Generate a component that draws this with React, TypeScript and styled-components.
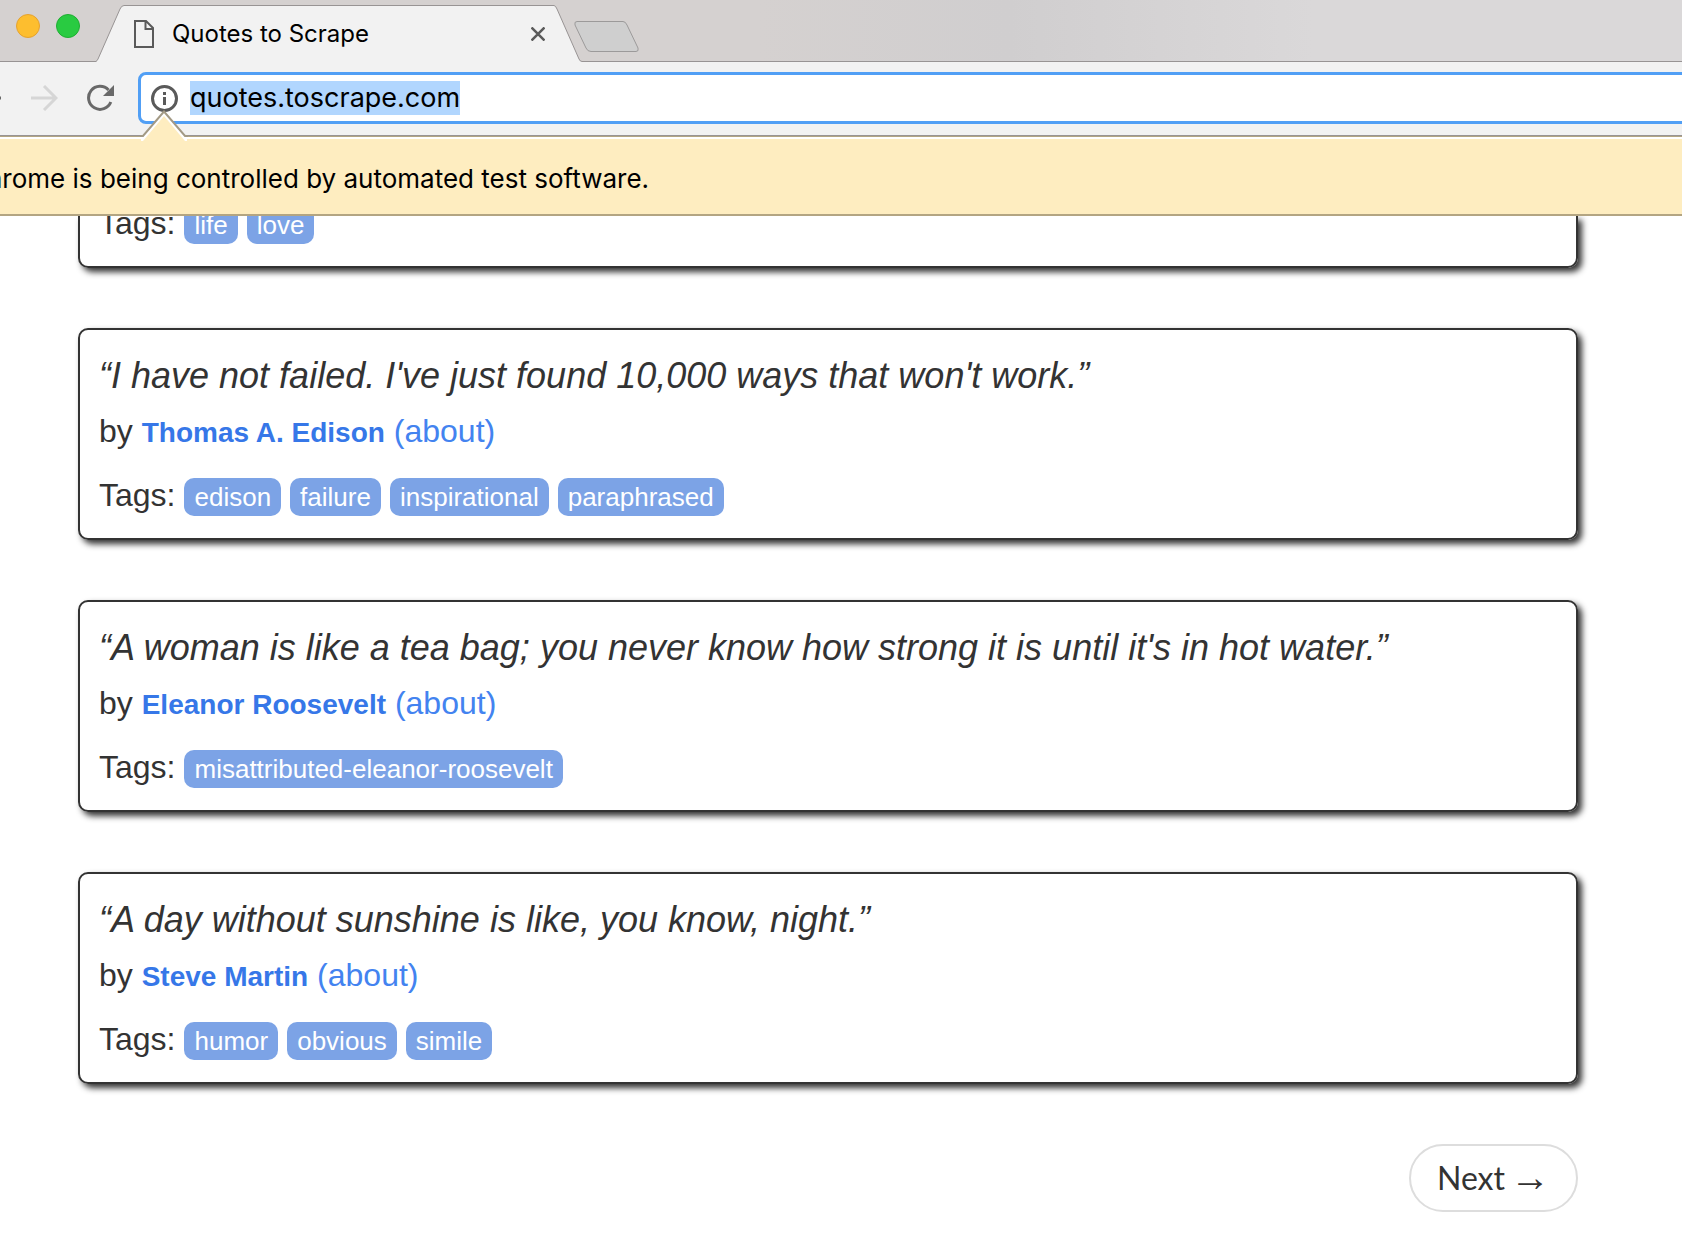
import React from 'react';
import styled, { createGlobalStyle } from 'styled-components';

const ui = `Inter, "Liberation Sans", sans-serif`;
const line = '#989494';

const Global = createGlobalStyle`
  * { box-sizing: border-box; }
  body { margin: 0; background: #fff; overflow: hidden; }
  button { font: inherit; padding: 0; border: 0; background: none; color: inherit; }
  svg { display: block; }
`;

const Window = styled.div`
  font-family: "Liberation Sans", Arial, sans-serif;
  color: #333;
`;

const TabStrip = styled.header`
  display: flex;
  height: 62px;
  background: linear-gradient(90deg, #d5d1d0 0%, #d5d1d0 45%, #d0cecf 60%, #dad8d9 78%, #dad8d9 100%);
`;

const Ledge = styled.div<{ $grow?: boolean }>`
  display: flex;
  align-items: flex-start;
  flex: ${p => (p.$grow ? '1' : 'none')};
  border-bottom: 1px solid ${line};
`;

const Lights = styled.div`
  display: flex;
  gap: 16px;
  padding: 14px 16px;
  width: 96px;
`;

const Light = styled.button<{ $fill: string; $edge: string }>`
  flex: none;
  width: 24px;
  height: 24px;
  border-radius: 50%;
  background: ${p => p.$fill};
  border: 1px solid ${p => p.$edge};
`;

const Tab = styled.div`
  display: flex;
`;

const TabBody = styled.div`
  display: flex;
  align-items: center;
  width: 430px;
  margin-top: 5px;
  padding: 0 9px 0 10px;
  border-top: 1px solid ${line};
  background: #f2f2f2;
  font: 24px/32px ${ui};
  color: #000;
`;

const TabTitle = styled.span`
  flex: 1;
  margin-left: 18px;
`;

const NewTab = styled.button`
  margin: 20px 0 0 -8px;
`;

const Toolbar = styled.div`
  display: flex;
  align-items: center;
  height: 74px;
  padding-bottom: 1px;
  background: #f2f2f2;
  border-bottom: 1px solid ${line};
`;

const NavButtons = styled.div`
  display: flex;
  align-items: center;
  flex: none;
  width: 138px;
  color: #696969;
`;

const BackButton = styled.button`
  margin-left: -26px;
`;
const ForwardButton = styled.button`
  margin-left: 30px;
  color: #d6d6d6;
`;
const ReloadButton = styled.button`
  margin-left: 28px;
`;

const AddressBar = styled.form`
  display: flex;
  align-items: center;
  flex: 1;
  height: 52px;
  margin-right: -20px;
  padding-left: 10px;
  border: 3px solid #519ff5;
  border-radius: 8px;
  background: #fff;
`;

const Address = styled.input`
  field-sizing: content;
  height: 34px;
  margin-left: 12px;
  padding: 0;
  border: 0;
  outline: 0;
  background: #b1d6fe;
  color: #000;
  font: 27px/34px ${ui};
`;

const InfoBar = styled.div`
  position: relative;
  height: 80px;
  padding-top: 24px;
  border-top: 1px solid #b3a582;
  border-bottom: 2px solid #b3a582;
  background: #feedc0;
  box-shadow: inset 0 2px #fff;
  font: 26px/36px ${ui};
  color: #000;
  white-space: nowrap;
`;

const Pointer = styled.svg`
  position: absolute;
  left: 140px;
  top: -27px;
`;

const InfoText = styled.span`
  display: block;
  margin-left: -32px;
`;

const Page = styled.main`
  display: flex;
  flex-direction: column;
  gap: 60px;
  padding: 0 104px 34px 78px;
  overflow: hidden;
`;

const Card = styled.article<{ $cut?: boolean }>`
  padding: ${p => (p.$cut ? '0 19px 20px' : '20px 19px')};
  border: 2px solid #333;
  border-top-width: ${p => (p.$cut ? 0 : 2)}px;
  border-radius: ${p => (p.$cut ? '0 0 10px 10px' : '10px')};
  box-shadow: 4px 4px 6px #333;
  font-size: 32px;
  line-height: 46px;
`;

const Text = styled.p`
  margin: 0 0 6px;
  font-size: 36px;
  line-height: 52px;
  font-style: italic;
`;

const Byline = styled.p`
  margin: 0 0 18px;
`;

const Author = styled.strong`
  font-size: 28px;
  line-height: 32px;
  color: #3677e8;
`;

const About = styled.a`
  color: #4383f0;
  text-decoration: none;
`;

const Tags = styled.div<{ $cut?: boolean }>`
  display: flex;
  align-items: baseline;
  gap: 9px;
  margin-top: ${p => (p.$cut ? -16 : 0)}px;
`;

const Tag = styled.a`
  padding: 4px 10px;
  border-radius: 10px;
  background: #7ca3e6;
  color: #fff;
  font-size: 26px;
  line-height: 30px;
  text-decoration: none;
`;

const Pager = styled.nav`
  display: flex;
  justify-content: flex-end;
`;

const Next = styled.a`
  display: flex;
  align-items: center;
  gap: 5px;
  padding: 9px 26px;
  border: 2px solid #ddd;
  border-radius: 34px;
  color: #333;
  font: 400 32px/46px Lato, sans-serif;
  text-decoration: none;
`;

const Arrow = styled.span`
  font-family: "Liberation Serif", serif;
  font-size: 40px;
  line-height: 46px;
`;

const quotes = [
  { text: '“I have not failed. I\'ve just found 10,000 ways that won\'t work.”', author: 'Thomas A. Edison', tags: ['edison', 'failure', 'inspirational', 'paraphrased'] },
  { text: '“A woman is like a tea bag; you never know how strong it is until it\'s in hot water.”', author: 'Eleanor Roosevelt', tags: ['misattributed-eleanor-roosevelt'] },
  { text: '“A day without sunshine is like, you know, night.”', author: 'Steve Martin', tags: ['humor', 'obvious', 'simile'] },
];

function TagRow({ tags, cut }: { tags: string[]; cut?: boolean }) {
  return (
    <Tags $cut={cut}>
      <span>Tags:</span>
      {tags.map(t => <Tag key={t} href="#">{t}</Tag>)}
    </Tags>
  );
}

function ArrowIcon({ flip }: { flip?: boolean }) {
  return (
    <svg width="27" height="26" viewBox="0 0 27 26" fill="none" stroke="currentColor" strokeWidth="3">
      <path d={flip ? 'M27 13H3M14 1L2 13l12 12' : 'M0 13h24M13 1l12 12-12 12'} />
    </svg>
  );
}

export default function App() {
  return (
    <Window>
      <Global />
      <TabStrip>
        <Ledge>
          <Lights>
            <Light aria-label="Minimize" $fill="#fdbe2f" $edge="#e5a230" />
            <Light aria-label="Zoom" $fill="#29cb41" $edge="#1fae32" />
          </Lights>
        </Ledge>
        <Tab>
          <svg width="28" height="62" viewBox="0 0 28 62">
            <path d="M0 62V61.5Q1 61 2 59L24 9Q25.500 5.500 28 5.500V62Z" fill="#f2f2f2" />
            <path d="M0 61.500Q1 61 2 59L24 9Q25.500 5.500 28 5.500" fill="none" stroke={line} />
          </svg>
          <TabBody>
            <svg width="20" height="28" viewBox="0 0 20 28" fill="none" stroke="#5a5a5a" strokeWidth="2">
              <path d="M1 1H12L19 8V27H1ZM11.500 1V9H19" />
            </svg>
            <TabTitle>Quotes to Scrape</TabTitle>
            <button aria-label="Close tab">
              <svg width="14" height="14" viewBox="0 0 14 14" stroke="#5a5a5a" strokeWidth="2.500">
                <path d="M.5 .5l13 13M13.500 .5l-13 13" />
              </svg>
            </button>
          </TabBody>
          <svg width="28" height="62" viewBox="0 0 28 62">
            <path d="M28 62V61.500Q26 61.500 25 59L3 9Q1.500 5.500 0 5.500V62Z" fill="#f2f2f2" />
            <path d="M28 61.500Q26 61.500 25 59L3 9Q1.500 5.500 0 5.500" fill="none" stroke={line} />
          </svg>
        </Tab>
        <Ledge $grow>
          <NewTab aria-label="New tab">
            <svg width="66" height="33" viewBox="0 0 66 33">
              <path d="M3 1.500H49Q51.500 1.500 53 5L64 28Q65 31.500 62 31.500H17Q13.500 31.500 12 28L1 5Q0 1.500 3 1.500Z" fill="#cfcfcf" stroke="#9c9a9a" />
            </svg>
          </NewTab>
        </Ledge>
      </TabStrip>
      <Toolbar>
        <NavButtons>
          <BackButton aria-label="Back"><ArrowIcon flip /></BackButton>
          <ForwardButton aria-label="Forward"><ArrowIcon /></ForwardButton>
          <ReloadButton aria-label="Reload">
            <svg width="30" height="28" viewBox="0 0 30 28">
              <path d="M24.800 18A11.500 11.500 0 1 1 22.500 6" fill="none" stroke="currentColor" strokeWidth="3" />
              <path d="M28 1V12H17Z" fill="currentColor" />
            </svg>
          </ReloadButton>
        </NavButtons>
        <AddressBar>
          <svg width="27" height="27" viewBox="0 0 27 27">
            <circle cx="13.500" cy="13.500" r="12" fill="none" stroke="#5a5a5a" strokeWidth="3" />
            <path d="M12 7h3v3h-3zM12 12h3v8h-3z" fill="#5a5a5a" />
          </svg>
          <Address aria-label="Address" defaultValue="quotes.toscrape.com" />
        </AddressBar>
      </Toolbar>
      <InfoBar>
        <Pointer width="48" height="31" viewBox="0 0 48 31">
          <path d="M1 31V27L24 2L47 27V31Z" fill="#fff" />
          <path d="M3 31L24 6L45 31Z" fill="#feedc0" />
          <path d="M0 26H3L24 1.500L45 26H48" fill="none" stroke="#a39a85" strokeWidth="2" />
        </Pointer>
        <InfoText>Chrome is being controlled by automated test software.</InfoText>
      </InfoBar>
      <Page>
        <Card $cut><TagRow cut tags={['life', 'love']} /></Card>
        {quotes.map(q => (
          <Card key={q.author}>
            <Text>{q.text}</Text>
            <Byline>by <Author>{q.author}</Author> <About href="#">(about)</About></Byline>
            <TagRow tags={q.tags} />
          </Card>
        ))}
        <Pager><Next href="#">Next <Arrow>→</Arrow></Next></Pager>
      </Page>
    </Window>
  );
}
